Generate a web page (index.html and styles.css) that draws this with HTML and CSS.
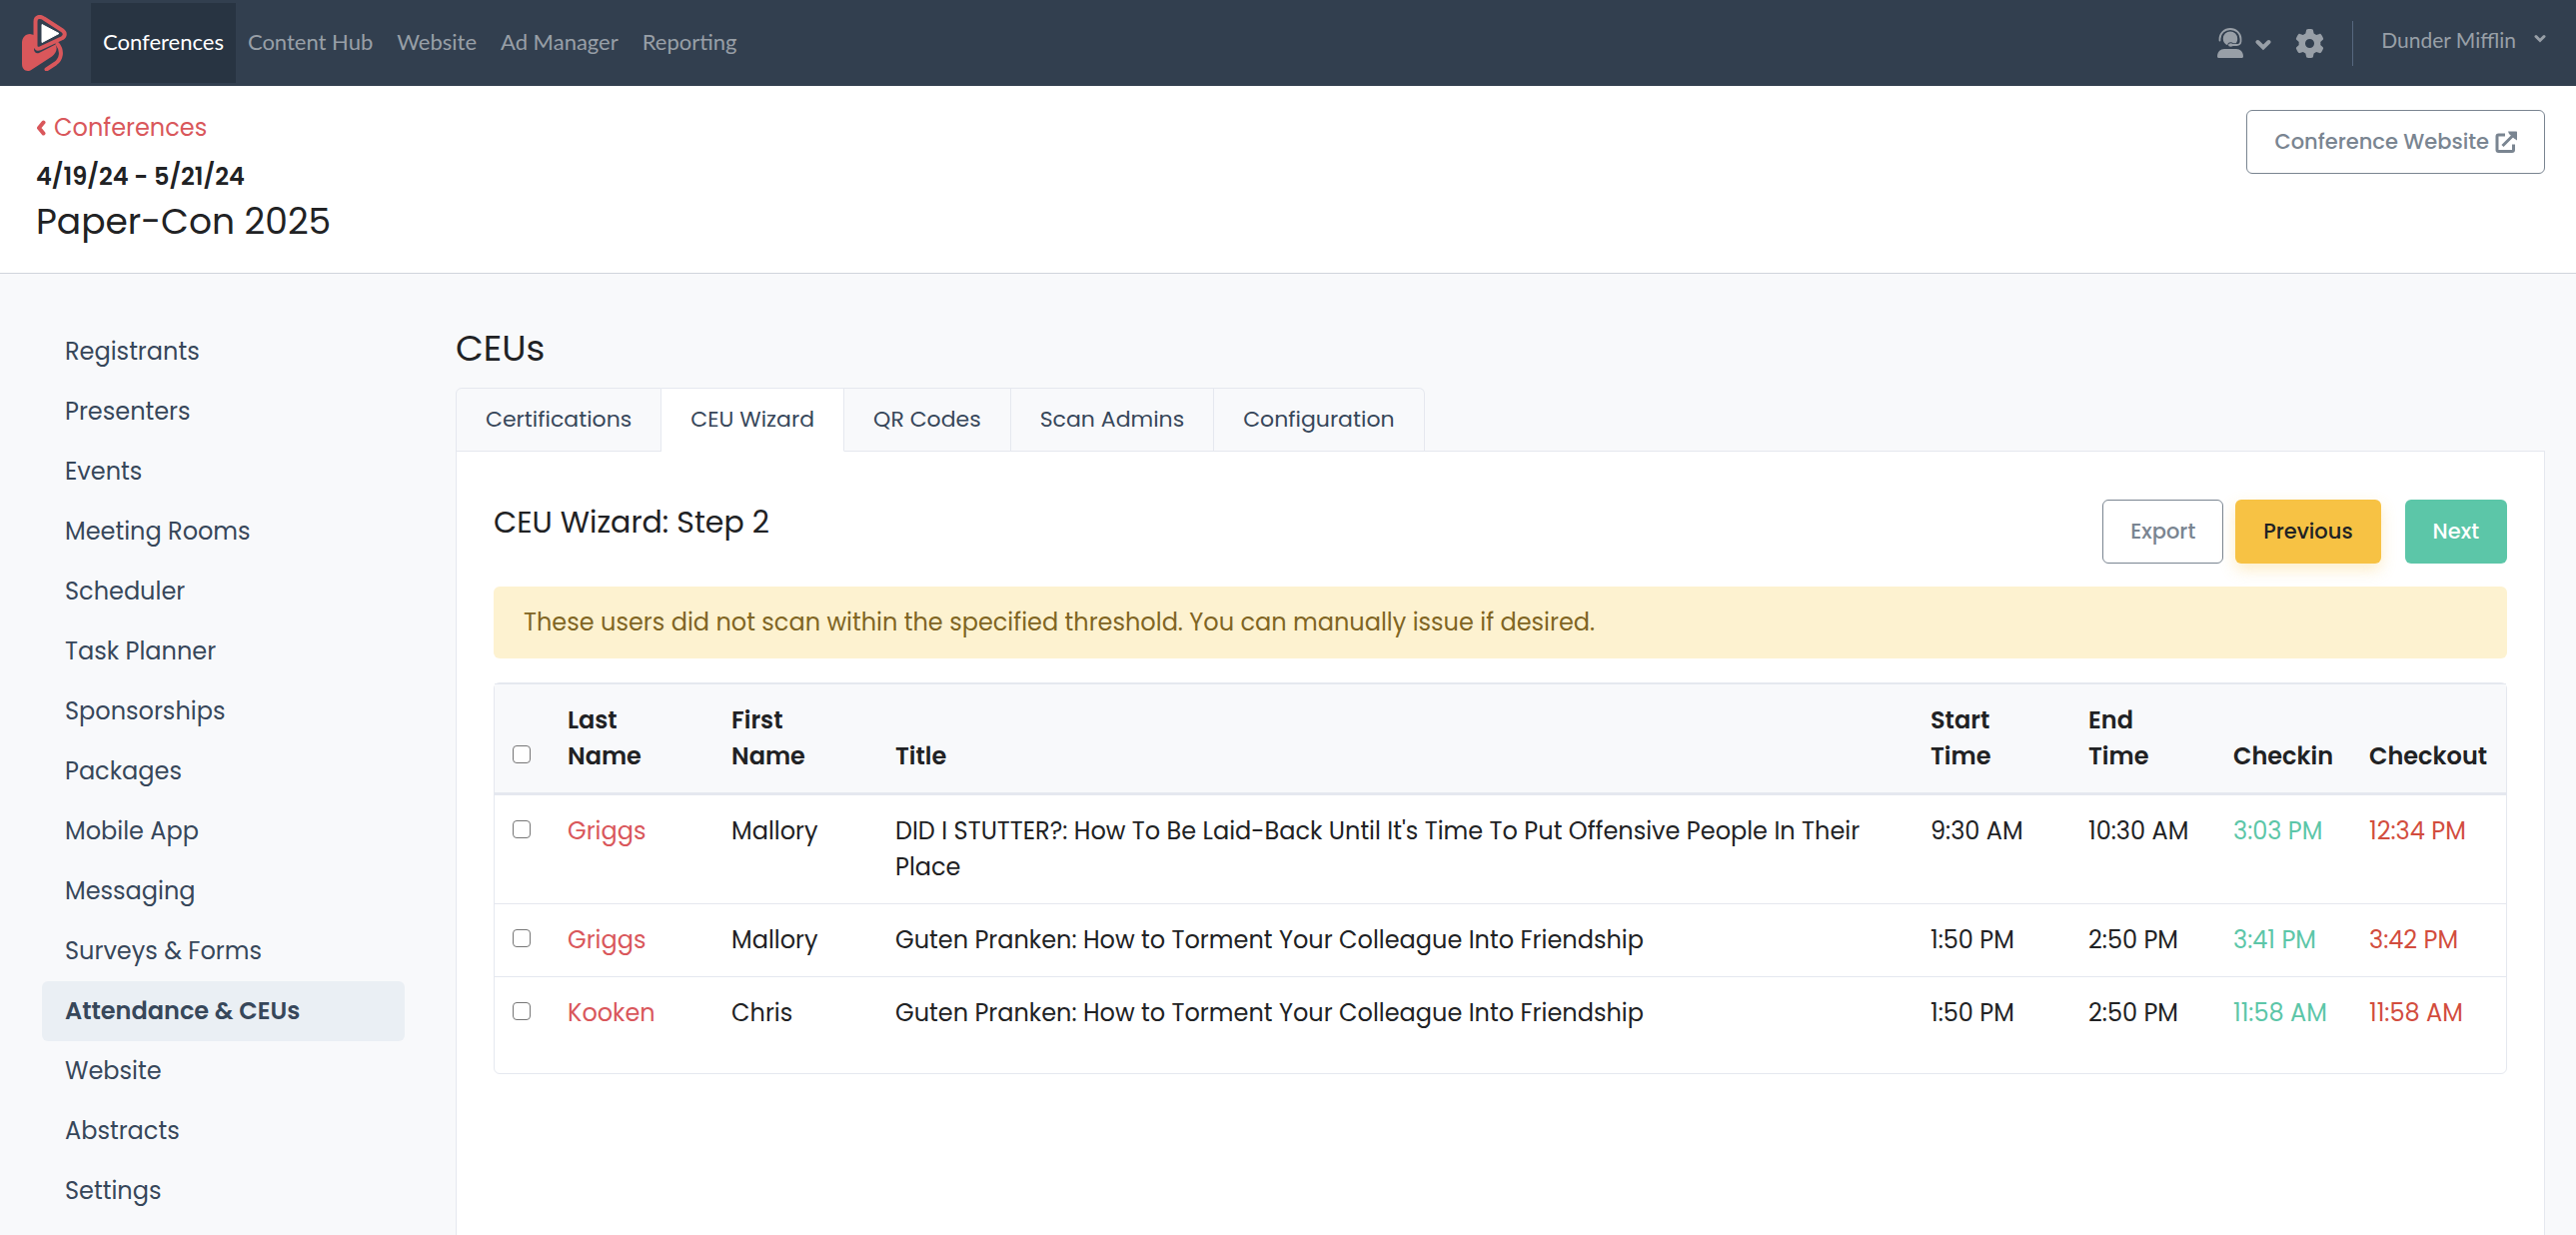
FILE: index.html
```html
<!DOCTYPE html>
<html lang="en">
  <head>
    <meta charset="UTF-8">
    <title>CEU Wizard - Paper-Con 2025</title>
    <link rel="stylesheet" href="styles.css">
  </head>
  <body>
    <header class="navbar">
      <a class="logo" href="#" aria-label="Home">
        <svg width="46" height="56" viewBox="0 0 46 56">
          <path d="M8 19C3 19 0 23 0 28V49C0 55 5 58 10 54.500L30 41.500C34 38.500 36 34 33.500 29.500L17 38C14 39 12 37 12 34V20Z" fill="#d9575b"/>
          <path d="M35.500 29C41 36 39.500 44 33.500 48.500L24.500 54.500" fill="none" stroke="#d9575b" stroke-width="4" stroke-linecap="round"/>
          <path d="M13.500 6.500C13.500 2 18 .5 22 3.500L40.500 15.500C43.500 17.500 43.500 21 40.500 23L18 33.500C15.500 34.500 13.500 33 13.500 30.500Z" fill="#323f4f" stroke="#d9575b" stroke-width="4" stroke-linejoin="round"/>
          <path d="M20 9.500L37 18.500L20 27.500Z" fill="#fff" stroke="#fff" stroke-width="1" stroke-linejoin="round"/>
        </svg>
      </a>
      <nav class="nav-links">
        <a class="active" href="#">Conferences</a>
        <a href="#">Content Hub</a>
        <a href="#">Website</a>
        <a href="#">Ad Manager</a>
        <a href="#">Reporting</a>
      </nav>
      <div class="nav-right">
        <button type="button" class="support" aria-label="Support">
          <svg width="26" height="31" viewBox="0 0 26 31">
            <path d="M2.500 12.500V11a10.500 10 0 0 1 21 0v2.500a4 4 0 0 1-4 3.500H15" fill="none" stroke="currentColor" stroke-width="1.800" stroke-linecap="round"/>
            <path d="M13 3.500a7.200 7.200 0 0 1 7.200 7.200c0 1.800-.5 3.200-1.400 4.500H16c-.6-.7-1.500-1-2.500-1-2 0-3.200 1.200-3.200 3-2.800-1.100-4.500-3.500-4.500-6.500A7.200 7.200 0 0 1 13 3.500Z" fill="currentColor"/>
            <ellipse cx="13.500" cy="17" rx="2.500" ry="1.800" fill="currentColor"/>
            <path d="M7 21h12c4 0 7 3 7 7.500 0 .9-.6 1.500-1.500 1.500h-23C.6 30 0 29.400 0 28.500 0 24 3 21 7 21Z" fill="currentColor"/>
          </svg>
          <svg class="caret" width="16" height="12" viewBox="0 0 16 12"><path d="M2.500 3L8 8.500L13.500 3" fill="none" stroke="currentColor" stroke-width="4" stroke-linecap="round"/></svg>
        </button>
        <button type="button" class="settings" aria-label="Settings">
          <svg width="29" height="29" viewBox="0 0 512 512"><path fill="currentColor" d="M495.900 166.600c3.200 8.700 .5 18.400-6.400 24.600l-43.300 39.400c1.100 8.300 1.700 16.800 1.700 25.400s-.6 17.100-1.700 25.400l43.300 39.400c6.900 6.200 9.600 15.900 6.400 24.600c-4.400 11.900-9.700 23.300-15.800 34.300l-4.700 8.100c-6.600 11-14 21.400-22.100 31.200c-5.900 7.200-15.700 9.600-24.500 6.800l-55.700-17.700c-13.400 10.300-28.200 18.900-44 25.400l-12.500 57.100c-2 9.100-9 16.300-18.200 17.800c-13.800 2.300-28 3.500-42.500 3.500s-28.700-1.200-42.500-3.500c-9.200-1.500-16.200-8.700-18.200-17.800l-12.500-57.100c-15.800-6.500-30.600-15.100-44-25.400L83.100 425.900c-8.800 2.800-18.600 .3-24.500-6.800c-8.100-9.800-15.500-20.200-22.100-31.200l-4.700-8.100c-6.100-11-11.400-22.400-15.800-34.300c-3.200-8.700-.5-18.400 6.400-24.600l43.300-39.400C64.600 273.100 64 264.600 64 256s.6-17.100 1.700-25.400L22.400 191.200c-6.900-6.200-9.600-15.900-6.400-24.600c4.400-11.900 9.700-23.300 15.800-34.300l4.700-8.100c6.600-11 14-21.400 22.100-31.200c5.900-7.200 15.700-9.600 24.500-6.800l55.700 17.700c13.400-10.300 28.200-18.900 44-25.400l12.500-57.100c2-9.100 9-16.300 18.200-17.800C227.300 1.200 241.500 0 256 0s28.700 1.200 42.500 3.500c9.200 1.500 16.200 8.700 18.200 17.800l12.500 57.100c15.800 6.500 30.600 15.100 44 25.400l55.700-17.700c8.800-2.800 18.600-.3 24.500 6.800c8.100 9.800 15.500 20.200 22.100 31.200l4.700 8.100c6.100 11 11.400 22.400 15.800 34.300zM256 336a80 80 0 1 0 0-160 80 80 0 1 0 0 160z"/></svg>
        </button>
        <button type="button" class="account">
          Dunder Mifflin
          <svg width="12" height="10" viewBox="0 0 12 10"><path d="M2 2.500L6 6.500L10 2.500" fill="none" stroke="currentColor" stroke-width="3" stroke-linecap="round"/></svg>
        </button>
      </div>
    </header>

    <section class="page-header">
      <div>
        <a class="back" href="#"><svg width="10" height="16" viewBox="0 0 10 16"><path d="M7.500 2.500L3 8L7.500 13.500" fill="none" stroke="currentColor" stroke-width="4" stroke-linecap="round" stroke-linejoin="round"/></svg>Conferences</a>
        <p class="dates">4/19/24 - 5/21/24</p>
        <h1>Paper-Con 2025</h1>
      </div>
      <a class="btn btn-outline" href="#">Conference Website
        <svg width="22" height="22" viewBox="0 0 22 22"><path d="M10 4H3.500C2.400 4 2 4.400 2 5.500V19C2 20 2.500 20.500 3.500 20.500H17C18 20.500 18.500 20 18.500 19V13.500M7.500 15L18.500 4" fill="none" stroke="currentColor" stroke-width="3"/><path d="M13 .5H21C21.600 .5 22 .9 22 1.500V9.500L19 7.500L14 3Z" fill="currentColor"/></svg>
      </a>
    </section>

    <div class="layout">
      <nav class="sidebar">
        <a href="#">Registrants</a>
        <a href="#">Presenters</a>
        <a href="#">Events</a>
        <a href="#">Meeting Rooms</a>
        <a href="#">Scheduler</a>
        <a href="#">Task Planner</a>
        <a href="#">Sponsorships</a>
        <a href="#">Packages</a>
        <a href="#">Mobile App</a>
        <a href="#">Messaging</a>
        <a href="#">Surveys &amp; Forms</a>
        <a class="active" href="#">Attendance &amp; CEUs</a>
        <a href="#">Website</a>
        <a href="#">Abstracts</a>
        <a href="#">Settings</a>
      </nav>

      <main class="content">
        <h2>CEUs</h2>
        <nav class="tabs">
          <a href="#">Certifications</a>
          <a class="active" href="#">CEU Wizard</a>
          <a href="#">QR Codes</a>
          <a href="#">Scan Admins</a>
          <a href="#">Configuration</a>
        </nav>
        <div class="card">
          <div class="card-top">
            <h3>CEU Wizard: Step 2</h3>
            <div class="actions">
              <button type="button" class="btn btn-outline">Export</button>
              <button type="button" class="btn btn-warning">Previous</button>
              <button type="button" class="btn btn-success">Next</button>
            </div>
          </div>
          <div class="alert">These users did not scan within the specified threshold. You can manually issue if desired.</div>
          <div class="table-wrap">
            <table>
              <thead>
                <tr>
                  <th class="col-check"><input type="checkbox" aria-label="Select all"></th>
                  <th class="col-name">Last<br>Name</th>
                  <th class="col-name">First<br>Name</th>
                  <th>Title</th>
                  <th class="col-start">Start<br>Time</th>
                  <th class="col-end">End<br>Time</th>
                  <th class="col-in">Checkin</th>
                  <th class="col-out">Checkout</th>
                </tr>
              </thead>
              <tbody>
                <tr>
                  <td><input type="checkbox" aria-label="Select Mallory Griggs, 9:30 AM"></td>
                  <td><a href="#">Griggs</a></td>
                  <td>Mallory</td>
                  <td>DID I STUTTER?: How To Be Laid-Back Until It's Time To Put Offensive People In Their Place</td>
                  <td>9:30 AM</td>
                  <td>10:30 AM</td>
                  <td class="in">3:03 PM</td>
                  <td class="out">12:34 PM</td>
                </tr>
                <tr>
                  <td><input type="checkbox" aria-label="Select Mallory Griggs, 1:50 PM"></td>
                  <td><a href="#">Griggs</a></td>
                  <td>Mallory</td>
                  <td>Guten Pranken: How to Torment Your Colleague Into Friendship</td>
                  <td>1:50 PM</td>
                  <td>2:50 PM</td>
                  <td class="in">3:41 PM</td>
                  <td class="out">3:42 PM</td>
                </tr>
                <tr>
                  <td><input type="checkbox" aria-label="Select Chris Kooken"></td>
                  <td><a href="#">Kooken</a></td>
                  <td>Chris</td>
                  <td>Guten Pranken: How to Torment Your Colleague Into Friendship</td>
                  <td>1:50 PM</td>
                  <td>2:50 PM</td>
                  <td class="in">11:58 AM</td>
                  <td class="out">11:58 AM</td>
                </tr>
              </tbody>
            </table>
          </div>
        </div>
      </main>
    </div>
  </body>
</html>
```
FILE: styles.css
```css
* {
  box-sizing: border-box;
}

body {
  display: flex;
  flex-direction: column;
  min-height: 100vh;
  margin: 0;
  background-color: #f8f9fb;
  color: #212224;
  font-family: Poppins, Inter, sans-serif;
  font-size: 24px;
  line-height: 36px;
}

h1, h2, h3, p {
  margin: 0;
  font-weight: 400;
}

a {
  color: #d9575b;
  text-decoration: none;
}

button {
  font-family: inherit;
  cursor: pointer;
}

/* Top bar */
.navbar {
  display: flex;
  align-items: center;
  height: 86px;
  padding: 0 30px 0 22px;
  background-color: #323f4f;
  color: #989fa7;
  font-family: "Avenir Next", Lato, sans-serif;
  font-size: 22px;
}

.logo {
  display: flex;
  margin-right: 23px;
}

.nav-links {
  display: flex;
}

.nav-links a {
  padding: 0 12px 2px;
  line-height: 78px;
  color: #989fa7;
}

.nav-links .active {
  background-color: #283442;
  color: #fff;
}

.nav-right {
  display: flex;
  align-items: center;
  margin-left: auto;
}

.nav-right button {
  display: flex;
  align-items: center;
  padding: 0;
  border: 0;
  background: none;
  color: inherit;
  font-size: 21px;
}

.nav-right .support {
  gap: 12px;
  margin-right: 24px;
}

.support .caret {
  margin-top: 4px;
}

.nav-right .account {
  gap: 18px;
  height: 45px;
  margin-left: 28px;
  padding: 0 0 8px 28px;
  border-left: 1px solid #56677e;
}

/* Conference header */
.page-header {
  display: flex;
  justify-content: space-between;
  align-items: flex-start;
  padding: 24px 31px 24px 36px;
  border-bottom: 1px solid #d0d5dc;
  background-color: #fff;
}

.back {
  display: flex;
  align-items: center;
  gap: 8px;
}

.dates {
  margin-top: 13px;
  font-weight: 600;
}

h1 {
  font-size: 36px;
  line-height: 54px;
}

.btn {
  display: inline-flex;
  align-items: center;
  gap: 6px;
  padding: 13px 27px;
  border: 1px solid transparent;
  border-radius: 6px;
  font-size: 21px;
  font-weight: 500;
  line-height: 36px;
}

.btn-outline {
  border-color: #7a8591;
  background-color: #fff;
  color: #7a8591;
}

.btn-warning {
  background-color: #f7c244;
  color: #212224;
  box-shadow: 0 6px 15px rgba(247, 194, 68, 0.3);
}

.btn-success {
  background-color: #5cc6a8;
  color: #fff;
}

/* Layout */
.layout {
  display: flex;
  flex: 1;
  padding: 0 31px 0 42px;
}

.sidebar {
  flex: none;
  width: 363px;
  margin-right: 51px;
  padding-top: 48px;
}

.sidebar a {
  display: block;
  padding: 12px 23px;
  border-radius: 6px;
  color: #37475a;
}

.sidebar .active {
  background-color: #eaeff4;
  font-weight: 600;
}

.content {
  display: flex;
  flex: 1;
  flex-direction: column;
  padding-top: 48px;
}

h2 {
  margin-bottom: 12px;
  font-size: 36px;
  line-height: 54px;
}

.tabs {
  display: flex;
  z-index: 1;
  margin-bottom: -1px;
}

.tabs a {
  padding: 13px 29px;
  border: 1px solid #e5e8ef;
  border-left-width: 0;
  color: #37475a;
  font-size: 22px;
}

.tabs a:first-child {
  border-left-width: 1px;
  border-top-left-radius: 6px;
}

.tabs a:last-child {
  border-top-right-radius: 6px;
}

.tabs .active {
  border-bottom-color: #fff;
  background-color: #fff;
}

.card {
  flex: 1;
  padding: 48px 37px;
  border: 1px solid #e5e8ef;
  border-bottom: 0;
  background-color: #fff;
}

.card-top {
  display: flex;
  justify-content: space-between;
  align-items: flex-start;
  margin-bottom: 23px;
}

h3 {
  font-size: 30px;
  line-height: 45px;
}

.actions {
  display: flex;
  gap: 12px;
}

.btn-success {
  margin-left: 12px;
}

.alert {
  margin-bottom: 24px;
  padding: 18px 30px;
  border-radius: 6px;
  background-color: #fdf2d0;
  color: #806523;
}

/* Table */
.table-wrap {
  padding-bottom: 24px;
  border: 1px solid #e5e8ef;
  border-radius: 6px;
}

table {
  width: 100%;
  border-collapse: collapse;
  table-layout: fixed;
}

th, td {
  padding: 18px;
  border-top: 1px solid #e5e8ef;
  text-align: left;
  vertical-align: top;
}

th {
  border-bottom: 3px solid #e5e8ef;
  background-color: #f8f9fb;
  font-weight: 600;
  vertical-align: bottom;
}

th:last-child, td:last-child {
  padding-right: 0;
}

.col-check {
  width: 55px;
}

.col-name {
  width: 164px;
}

.col-start {
  width: 158px;
}

.col-end {
  width: 145px;
}

.col-in {
  width: 136px;
}

.col-out {
  width: 155px;
}

input[type="checkbox"] {
  display: block;
  width: 18px;
  height: 18px;
  margin: 7px 0 11px;
  border: 1px solid #767676;
  border-radius: 4px;
  background-color: #fff;
  appearance: none;
}

input[type="checkbox"]:checked {
  background-color: #d9575b;
}

.in {
  color: #5cc6a8;
}

.out {
  color: #d24d3e;
}
```
